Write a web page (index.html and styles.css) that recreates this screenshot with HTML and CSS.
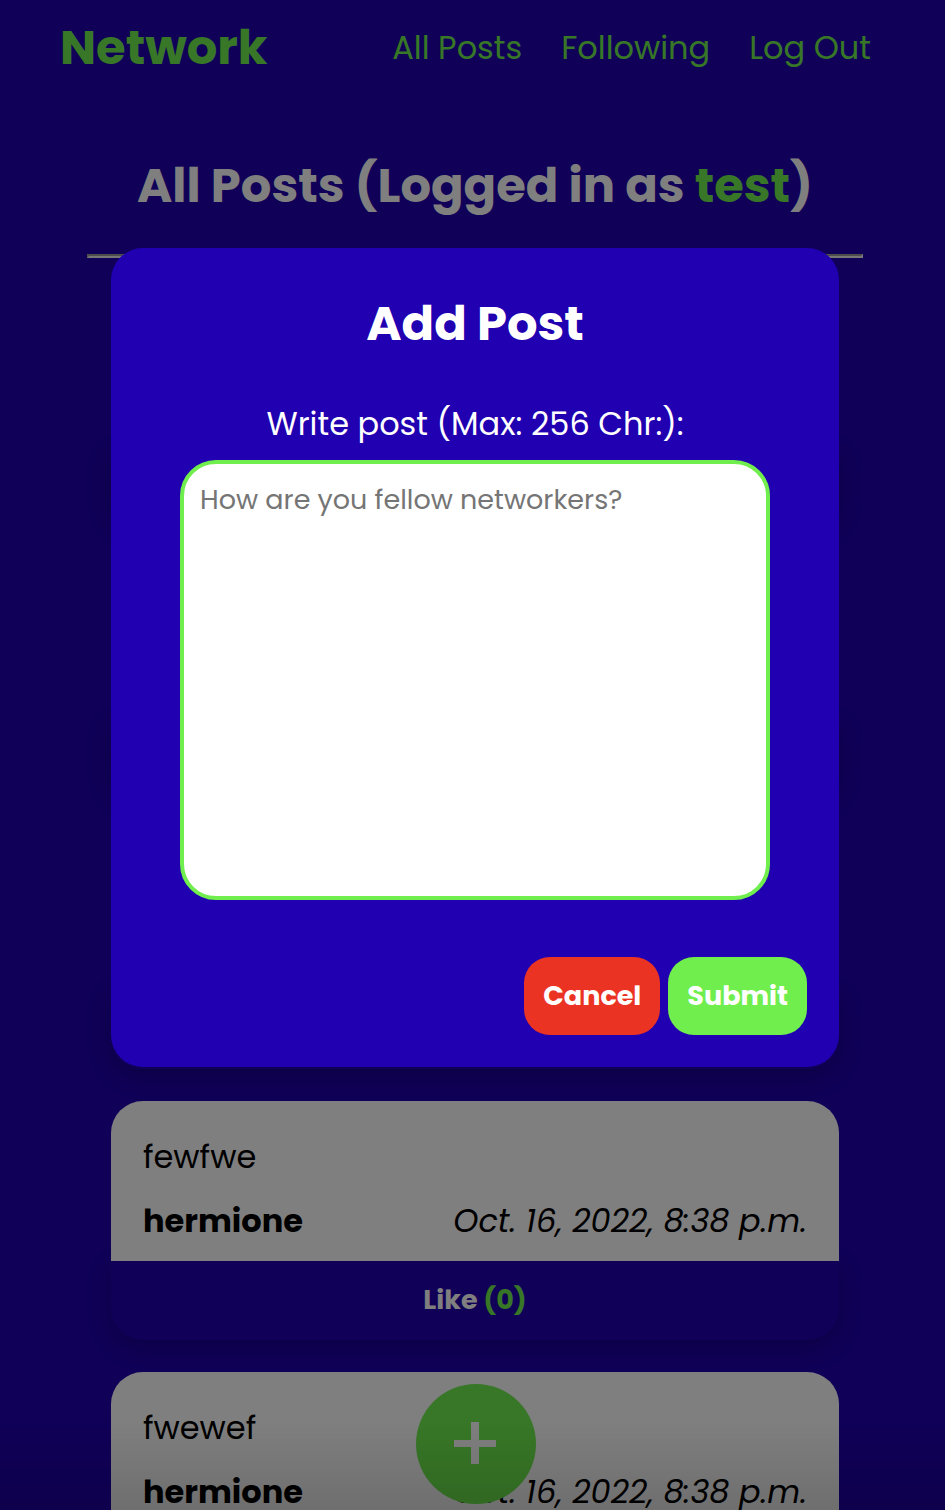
FILE: index.html
```html
<!DOCTYPE html>
<html lang="en">
<head>
<meta charset="utf-8">
<meta name="viewport" content="width=device-width, initial-scale=1">
<title>Network</title>
<link rel="stylesheet" href="styles.css">
</head>
<body>
<header class="site-header">
  <a class="brand" href="#">Network</a>
  <nav class="site-nav">
    <a href="#">All Posts</a>
    <a href="#">Following</a>
    <a href="#">Log Out</a>
  </nav>
</header>
<main class="page">
  <h1 class="page-title">All Posts (Logged in as <span class="accent">test</span>)</h1>
  <hr class="rule">
  <div class="posts">
    <article class="post"><div class="like"></div></article>
    <article class="post"><div class="like"></div></article>
    <article class="post"><div class="like"></div></article>
    <article class="post">
      <div class="post-body">
        <p class="post-text">fewfwe</p>
        <div class="post-meta"><strong class="author">hermione</strong><em class="date">Oct. 16, 2022, 8:38 p.m.</em></div>
      </div>
      <button class="like" type="button">Like <span class="accent">(0)</span></button>
    </article>
    <article class="post">
      <div class="post-body">
        <p class="post-text">fwewef</p>
        <div class="post-meta"><strong class="author">hermione</strong><em class="date">Oct. 16, 2022, 8:38 p.m.</em></div>
      </div>
      <div class="like"></div>
    </article>
  </div>
</main>
<button class="add" type="button" aria-label="Add post">
  <svg class="add-icon" viewBox="0 0 42 42" aria-hidden="true"><path d="M17 0h8v18h17v7H25v17h-8V25H0v-7h17z" fill="#fff"/></svg>
</button>
<div class="overlay">
  <form class="modal" role="dialog" aria-labelledby="modal-title">
    <h2 class="modal-title" id="modal-title">Add Post</h2>
    <label class="modal-label" for="post">Write post (Max: 256 Chr:):</label>
    <textarea class="modal-input" id="post" maxlength="256" placeholder="How are you fellow networkers?"></textarea>
    <div class="modal-actions">
      <button class="btn btn-cancel" type="button">Cancel</button>
      <button class="btn btn-submit" type="submit">Submit</button>
    </div>
  </form>
</div>
</body>
</html>
```
FILE: styles.css
```css
:root {
  --blue: #2000b0;
  --green: #70ee4e;
}
* { box-sizing: border-box; }
body {
  margin: 0;
  height: 100vh;
  overflow: hidden;
  background: var(--blue);
  color: #000;
  font: 32px/48px Poppins, Inter, sans-serif;
}
button, textarea { font-family: inherit; }
.accent { color: var(--green); }
.site-header {
  display: flex;
  align-items: center;
  justify-content: space-between;
  height: 96px;
  padding: 0 74px 0 60px;
}
.site-header a { color: var(--green); text-decoration: none; }
.site-header .brand { font-size: 48px; font-weight: 700; }
.site-nav { display: flex; gap: 39px; }
.page { padding: 54px 82px 0 87px; }
.page-title {
  margin: 0 0 32px;
  color: #fff;
  font-size: 48px;
  line-height: 72px;
  font-weight: 700;
  text-align: center;
  white-space: nowrap;
}
.rule {
  margin: 0;
  border: 2px solid;
  border-color: #9a9a9a #eee #eee #9a9a9a;
}
.posts { display: grid; gap: 32px; padding: 30px 24px; }
.post {
  display: flex;
  flex-direction: column;
  justify-content: flex-end;
  min-height: 239px;
}
.post-body {
  position: relative;
  display: grid;
  gap: 16px;
  padding: 32px 32px 16px;
  border-radius: 32px 32px 0 0;
  background: #fff;
}
.post-text { margin: 0; }
.post-meta { display: flex; justify-content: space-between; }
.author { font-weight: 700; }
.like {
  width: 100%;
  min-height: 79px;
  padding: 19px 0 20px;
  border: 0;
  border-radius: 0 0 32px 32px;
  background: var(--blue);
  box-shadow: 0 8px 24px rgba(0, 0, 0, .22);
  color: #fff;
  font-size: 27px;
  line-height: 40px;
  font-weight: 700;
}
.add {
  position: fixed;
  bottom: 6px;
  left: 50%;
  display: grid;
  place-items: center;
  width: 120px;
  height: 120px;
  margin-left: -57px;
  padding: 0 2px 3px 0;
  border: 0;
  border-radius: 50%;
  background: var(--green);
}
.add-icon { width: 42px; height: 42px; }
.overlay {
  position: fixed;
  inset: 0;
  padding: 248px 106px 0 111px;
  background: linear-gradient(transparent calc(100% - 90px), rgba(0, 0, 0, .13)), rgba(0, 0, 0, .5);
}
.modal {
  display: flex;
  flex-direction: column;
  padding: 40px 32px 32px;
  border-radius: 32px;
  background: var(--blue);
  color: #fff;
}
.modal-title {
  margin: 0 0 40px;
  font-size: 48px;
  line-height: 72px;
  font-weight: 700;
  text-align: center;
}
.modal-label { margin-bottom: 12px; text-align: center; }
.modal-input {
  height: 440px;
  margin: 0 37px 57px;
  padding: 16px;
  border: 4px solid var(--green);
  border-radius: 36px;
  background: #fff;
  font-size: 27px;
  line-height: 40px;
  resize: none;
}
.modal-input::placeholder { color: #757575; }
.modal-actions { display: flex; justify-content: flex-end; gap: 8px; }
.btn {
  padding: 19px;
  border: 0;
  border-radius: 26px;
  color: #fff;
  font-size: 27px;
  line-height: 40px;
  font-weight: 700;
}
.btn-cancel { background: #eb3323; }
.btn-submit { background: var(--green); }
```
